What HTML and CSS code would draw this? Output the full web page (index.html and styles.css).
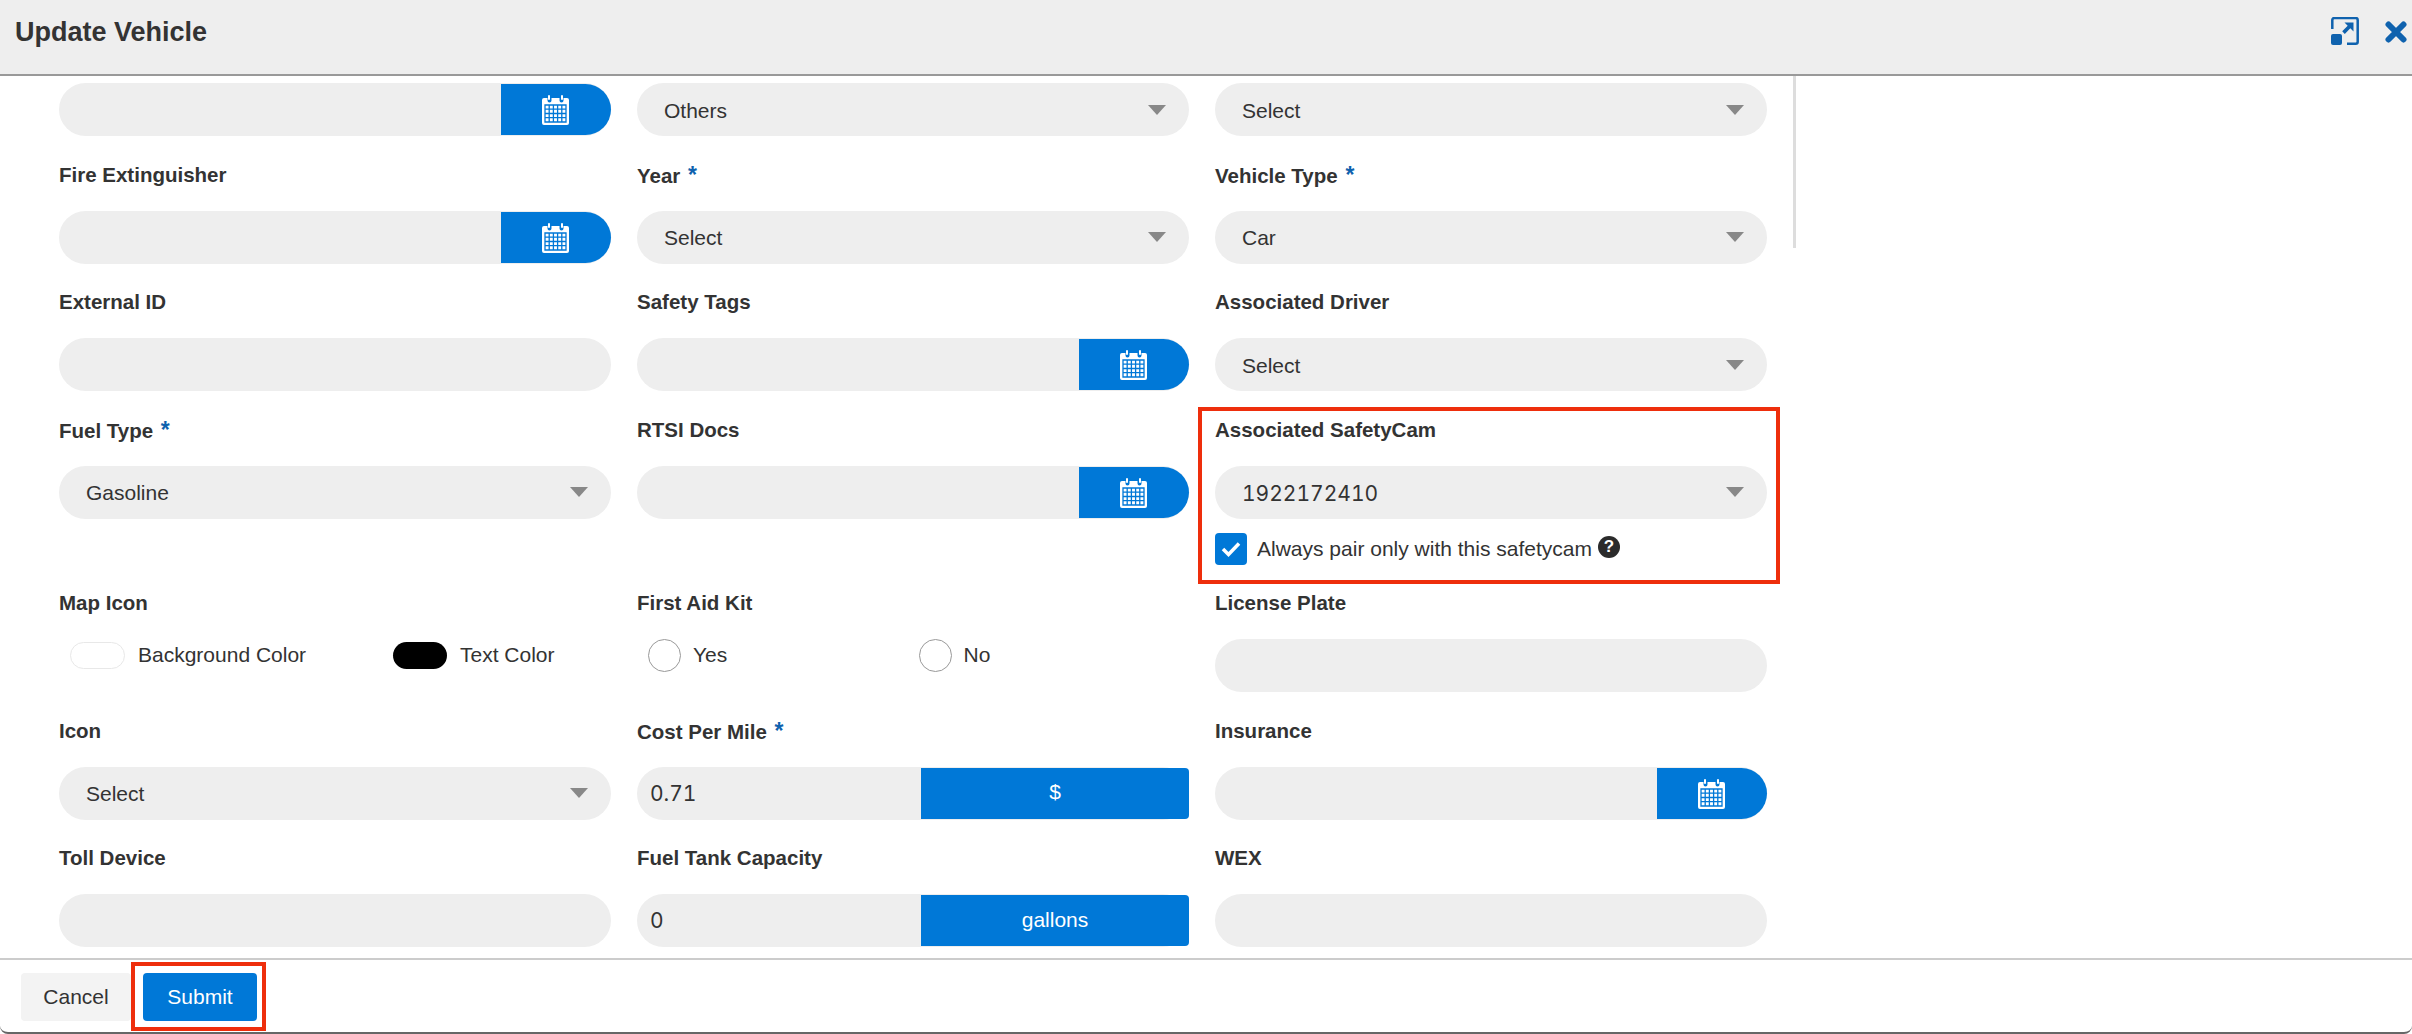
FILE: index.html
```html
<!DOCTYPE html>
<html lang="en">
<head>
    <meta charset="UTF-8">
    <title>Update Vehicle</title>
    <link rel="stylesheet" href="styles.css">
</head>
<body>
    <svg class="defs" width="0" height="0">
        <symbol id="cal" viewBox="0 0 27 31">
            <path fill="#fff" d="M2 4h3.500v2.500a2 2 0 0 0 4 0V4h8v2.500a2 2 0 0 0 4 0V4H25a2 2 0 0 1 2 2v23a2 2 0 0 1-2 2H2a2 2 0 0 1-2-2V6a2 2 0 0 1 2-2z"/>
            <rect fill="#fff" x="6" y="1" width="2" height="5" rx="1"/>
            <rect fill="#fff" x="19" y="1" width="2" height="5" rx="1"/>
            <path fill="none" stroke="#0078d7" stroke-width="1.300" d="M3 11h21v17H3zM3 15.200h21M3 19.500h21M3 23.700h21M7.200 11v17M11.400 11v17M15.600 11v17M19.800 11v17"/>
        </symbol>
    </svg>
    <div class="modal">
        <header class="modal-head">
            <h1>Update Vehicle</h1>
            <div class="head-icons">
                <svg width="28" height="28" viewBox="0 0 28 28"><path fill="none" stroke="#0f62ae" stroke-width="2.500" d="M1.300 12V3a2 2 0 0 1 2-2h21.400a2 2 0 0 1 2 2v21.700a2 2 0 0 1-2 2H16"/><rect fill="#0f62ae" x="0" y="17" width="11" height="11" rx="2"/><path fill="#0f62ae" d="M13.500 5.500H22.500V14.500L19.300 11.300 13.800 17 11.200 14.300 16.700 8.700z"/></svg>
                <svg width="22" height="22" viewBox="0 0 22 22"><path fill="none" stroke="#0f62ae" stroke-width="6" stroke-linecap="round" d="M3.500 3.500l15 15M18.500 3.500l-15 15"/></svg>
            </div>
        </header>
        <div class="modal-body">
            <div class="scroll-thumb"></div>
            <form class="form-grid">
                <div class="field">
                    <div class="date-input"><input type="text"><span class="addon"><svg width="27" height="31"><use href="#cal"/></svg></span></div>
                </div>
                <div class="field">
                    <div class="select"><span>Others</span><i class="caret"></i></div>
                </div>
                <div class="field">
                    <div class="select"><span>Select</span><i class="caret"></i></div>
                </div>

                <div class="field">
                    <label>Fire Extinguisher</label>
                    <div class="date-input"><input type="text"><span class="addon"><svg width="27" height="31"><use href="#cal"/></svg></span></div>
                </div>
                <div class="field">
                    <label>Year <b class="req">*</b></label>
                    <div class="select"><span>Select</span><i class="caret"></i></div>
                </div>
                <div class="field">
                    <label>Vehicle Type <b class="req">*</b></label>
                    <div class="select"><span>Car</span><i class="caret"></i></div>
                </div>

                <div class="field">
                    <label>External ID</label>
                    <input class="text-input" type="text">
                </div>
                <div class="field">
                    <label>Safety Tags</label>
                    <div class="date-input"><input type="text"><span class="addon"><svg width="27" height="31"><use href="#cal"/></svg></span></div>
                </div>
                <div class="field">
                    <label>Associated Driver</label>
                    <div class="select"><span>Select</span><i class="caret"></i></div>
                </div>

                <div class="field">
                    <label>Fuel Type <b class="req">*</b></label>
                    <div class="select"><span>Gasoline</span><i class="caret"></i></div>
                </div>
                <div class="field">
                    <label>RTSI Docs</label>
                    <div class="date-input"><input type="text"><span class="addon"><svg width="27" height="31"><use href="#cal"/></svg></span></div>
                </div>
                <div class="field marked">
                    <label>Associated SafetyCam</label>
                    <div class="select"><span class="num">1922172410</span><i class="caret"></i></div>
                    <div class="pair-row">
                        <span class="checkbox"><svg width="20" height="16" viewBox="0 0 20 16"><path fill="none" stroke="#fff" stroke-width="3.500" d="M2 8l5.500 5.500L18 2.500"/></svg></span>
                        <span>Always pair only with this safetycam</span>
                        <span class="help">?</span>
                    </div>
                </div>

                <div class="field">
                    <label>Map Icon</label>
                    <div class="color-row">
                        <span class="color-opt color-bg"><i class="swatch swatch-white"></i>Background Color</span>
                        <span class="color-opt"><i class="swatch swatch-black"></i>Text Color</span>
                    </div>
                </div>
                <div class="field">
                    <label>First Aid Kit</label>
                    <div class="radio-row">
                        <span class="radio-opt"><i class="radio"></i>Yes</span>
                        <span class="radio-opt"><i class="radio"></i>No</span>
                    </div>
                </div>
                <div class="field">
                    <label>License Plate</label>
                    <input class="text-input" type="text">
                </div>

                <div class="field">
                    <label>Icon</label>
                    <div class="select"><span>Select</span><i class="caret"></i></div>
                </div>
                <div class="field">
                    <label>Cost Per Mile <b class="req">*</b></label>
                    <div class="unit-input"><input class="num" type="text" value="0.71"><span class="unit">$</span></div>
                </div>
                <div class="field">
                    <label>Insurance</label>
                    <div class="date-input"><input type="text"><span class="addon"><svg width="27" height="31"><use href="#cal"/></svg></span></div>
                </div>

                <div class="field">
                    <label>Toll Device</label>
                    <input class="text-input" type="text">
                </div>
                <div class="field">
                    <label>Fuel Tank Capacity</label>
                    <div class="unit-input"><input class="num" type="text" value="0"><span class="unit">gallons</span></div>
                </div>
                <div class="field">
                    <label>WEX</label>
                    <input class="text-input" type="text">
                </div>
            </form>
        </div>
        <footer class="modal-foot">
            <button class="btn btn-cancel" type="button">Cancel</button>
            <button class="btn btn-submit" type="button">Submit</button>
        </footer>
    </div>
</body>
</html>
```

FILE: styles.css
```css
*, *::after {
    box-sizing: border-box;
}
html, body {
    height: 100%;
}
body {
    margin: 0;
    background-color: #fff;
    color: #333;
    font-family: "Liberation Sans", Arial, sans-serif;
    font-size: 21px;
    overflow: hidden;
}
.defs {
    position: absolute;
}
.modal {
    display: flex;
    flex-direction: column;
    height: 1034px;
    border-bottom: 2px solid #666;
    border-radius: 0 0 8px 8px;
    overflow: hidden;
}
.modal-head {
    display: flex;
    justify-content: space-between;
    height: 76px;
    padding: 17px 5px 0 15px;
    background-color: #eee;
    border-bottom: 2px solid #999;
}
.modal-head h1 {
    margin: 0;
    font-size: 27px;
    line-height: 30px;
    font-weight: bold;
    color: #333;
}
.head-icons {
    display: flex;
    align-items: flex-start;
    gap: 26px;
}
.head-icons svg:last-child {
    margin-top: 4px;
}
.modal-body {
    position: relative;
    flex: 1;
    padding: 7px 0 0 59px;
    overflow: hidden;
}
.scroll-thumb {
    position: absolute;
    left: 1793px;
    top: 0;
    width: 3px;
    height: 172px;
    background-color: #ddd;
}
.form-grid {
    display: grid;
    grid-template-columns: repeat(3, 552px);
    column-gap: 26px;
    row-gap: 23.5px;
}
.field {
    position: relative;
}
.field label {
    display: block;
    height: 30px;
    margin-bottom: 21px;
    font-weight: bold;
    font-size: 20.5px;
    line-height: 30px;
}
.req {
    margin-left: 2px;
    color: #0f62ae;
    font-size: 23px;
}
.text-input,
.select,
.date-input,
.unit-input {
    display: flex;
    width: 100%;
    height: 53px;
    background-color: #eee;
    border-radius: 27px;
    border: 0;
}
.select {
    align-items: center;
    justify-content: space-between;
    padding: 2px 23px 0 27px;
}
.caret {
    width: 0;
    height: 0;
    margin-top: -2px;
    border-left: 9px solid transparent;
    border-right: 9px solid transparent;
    border-top: 10px solid #888;
}
.date-input input,
.unit-input input {
    flex: 1;
    min-width: 0;
    border: 0;
    background: none;
    padding: 0 0 0 13px;
    color: #333;
}
.addon {
    display: flex;
    align-items: center;
    justify-content: center;
    width: 110px;
    margin: 1px 0;
    padding-right: 2px;
    background-color: #0078d7;
    border-radius: 0 26px 26px 0;
}
.unit {
    display: flex;
    align-items: center;
    justify-content: center;
    width: 268px;
    margin: 1px 0;
    padding-bottom: 2px;
    background-color: #0078d7;
    border-radius: 0 4px 4px 0;
    color: #fff;
    font-size: 21px;
}
.num {
    font-family: Inter, sans-serif;
    font-size: 21px;
    font-variant-numeric: tabular-nums;
}
.pair-row {
    display: flex;
    align-items: center;
    height: 32px;
    margin-top: 14px;
}
.checkbox {
    display: flex;
    align-items: center;
    justify-content: center;
    width: 32px;
    height: 32px;
    margin-right: 10px;
    background-color: #0078d7;
    border-radius: 4px;
}
.help {
    display: flex;
    align-items: center;
    justify-content: center;
    width: 22px;
    height: 22px;
    margin: -4px 0 0 6px;
    background-color: #2b2b2b;
    border-radius: 50%;
    color: #fff;
    font-size: 17px;
    font-weight: bold;
}
/* red annotation boxes from the original screenshot */
.marked::after {
    content: "";
    position: absolute;
    top: -8px;
    left: -17px;
    width: 582px;
    height: 177px;
    border: 4px solid #ee2e0c;
}
.color-row,
.radio-row {
    display: flex;
    align-items: center;
    height: 32px;
}
.color-row {
    padding-left: 11px;
}
.color-opt,
.radio-opt {
    display: flex;
    align-items: center;
}
.color-bg {
    width: 323px;
}
.swatch {
    width: 55px;
    height: 27px;
    margin-right: 13px;
    border-radius: 14px;
}
.swatch-white {
    background-color: #fff;
    border: 1px solid #e8e8e8;
}
.swatch-black {
    width: 54px;
    margin-right: 13px;
    background-color: #000;
}
.radio-row {
    padding-left: 11px;
}
.radio-opt {
    width: 276px;
}
.radio {
    width: 33px;
    height: 33px;
    margin-right: 12px;
    border: 1px solid #999;
    border-radius: 50%;
    background-color: #fff;
}
.modal-foot {
    position: relative;
    display: flex;
    align-items: flex-start;
    height: 74px;
    padding: 13px 0 0 21px;
    border-top: 2px solid #ccc;
}
.btn {
    height: 48px;
    border: 0;
    border-radius: 4px;
    font-family: inherit;
    font-size: 21px;
}
.btn-cancel {
    width: 110px;
    margin-right: 12px;
    background-color: #f3f3f3;
    color: #333;
}
.btn-submit {
    position: relative;
    width: 114px;
    background-color: #0078d7;
    color: #fff;
}
.btn-submit::after {
    content: "";
    position: absolute;
    top: -11px;
    left: -12px;
    width: 135px;
    height: 69px;
    border: 4px solid #ee2e0c;
}
```
